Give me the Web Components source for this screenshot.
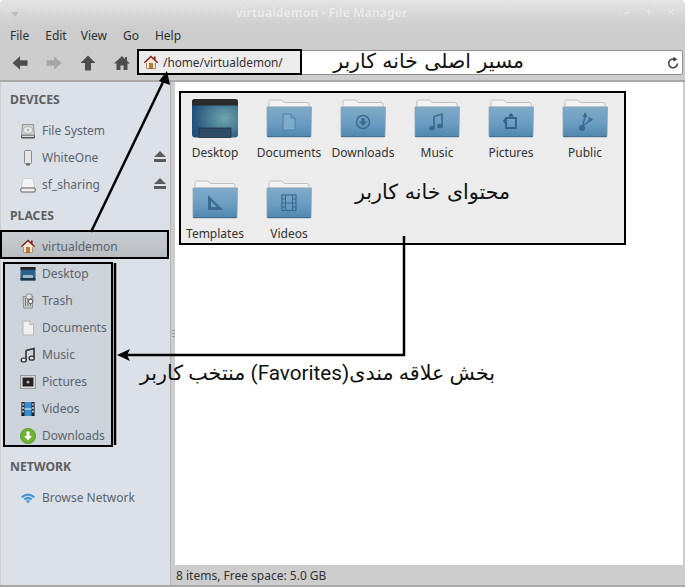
<!DOCTYPE html>
<html lang="en"><head><meta charset="utf-8"><title>File Manager</title>
<style>
html,body{margin:0;padding:0;background:#fff}
body{width:685px;height:588px;overflow:hidden;font:12px "Noto Sans",sans-serif;position:relative}
</style></head><body>
<fm-window title-text="virtualdemon - File Manager">
  <fm-sidebar slot="side">
    <fm-heading class="d">DEVICES</fm-heading>
    <fm-row icon="disk">File System</fm-row>
    <fm-row icon="usb" eject>WhiteOne</fm-row>
    <fm-row icon="drive" eject>sf_sharing</fm-row>
    <fm-heading class="p">PLACES</fm-heading>
    <fm-row icon="home" selected>virtualdemon</fm-row>
    <fm-favs>
      <fm-row icon="desktop">Desktop</fm-row>
      <fm-row icon="trash">Trash</fm-row>
      <fm-row icon="doc">Documents</fm-row>
      <fm-row icon="music">Music</fm-row>
      <fm-row icon="pics">Pictures</fm-row>
      <fm-row icon="video">Videos</fm-row>
      <fm-row icon="down">Downloads</fm-row>
    </fm-favs>
    <fm-heading class="n">NETWORK</fm-heading>
    <fm-row icon="wifi">Browse Network</fm-row>
  </fm-sidebar>
  <fm-content slot="main">
    <fm-item kind="desktop">Desktop</fm-item>
    <fm-item kind="doc">Documents</fm-item>
    <fm-item kind="down">Downloads</fm-item>
    <fm-item kind="music">Music</fm-item>
    <fm-item kind="pics">Pictures</fm-item>
    <fm-item kind="public">Public</fm-item>
    <fm-item kind="templates">Templates</fm-item>
    <fm-item kind="video">Videos</fm-item>
  </fm-content>
</fm-window>
<fm-annotations></fm-annotations>
<script>
const ICONS={
home:`<path d="M8 1.5 1 8l1 1.2L3 8.4V15h10V8.4l1 .8L15 8Z" fill="#f3e7d3"/><path d="M8 1.5 .8 8.2l1 1.1L8 3.6l6.2 5.7 1-1.1L12.6 5.8V2.5h-1.7v1.7Z" fill="#7a2620"/><path d="M3.5 9v5.6h9V9" fill="none" stroke="#a98e6d"/><rect x="6.5" y="9.5" width="3" height="5" fill="#c9772d" stroke="#8a4a18" stroke-width=".5"/>`,
disk:`<path d="M2.5 1.500h11l1 10.500h-13Z" fill="#cfd2cf" stroke="#777" stroke-width=".7"/><ellipse cx="8" cy="7" rx="4.6" ry="3.4" fill="#e5e7e5" stroke="#999" stroke-width=".6"/><circle cx="8" cy="7" r="1" fill="#999"/><rect x="1" y="12" width="14" height="3.4" rx="1" fill="#555"/><rect x="2" y="12.6" width="12" height="1.4" fill="#ddd"/>`,
usb:`<rect x="4.5" y="0.500" width="7" height="13" rx="1" fill="#e6e6e6" stroke="#8a8a8a"/><rect x="6" y="13.500" width="4" height="2" fill="#666"/>`,
drive:`<path d="M3 1.500h10l1.500 9.500h-13Z" fill="#f4f4f4" stroke="#c4c4c4" stroke-width=".7"/><rect x=".8" y="11" width="14.4" height="4" rx="1" fill="#eee" stroke="#555" stroke-width=".9"/>`,
desktop:`<rect x="0.500" y="1" width="15" height="13.500" rx="1.500" fill="#2c6289"/><rect x="0.500" y="1" width="15" height="2.800" fill="#222"/><rect x="3" y="9" width="10" height="5.500" fill="#9fb8c9"/><rect x="0.500" y="12" width="15" height="2.500" fill="#17384f"/>`,
trash:`<path d="M3 3.5h10l-.6 11.5H3.6Z" fill="#c8cbc8" stroke="#777" stroke-width=".7"/><path d="M5.5 5v8M8 5v8M10.5 5v8" stroke="#777"/><rect x="6" y="1" width="6" height="5" rx="2" fill="#dfdfdf" stroke="#777" stroke-width=".7"/><circle cx="10.6" cy="8.4" r="2.2" fill="#eee" stroke="#555"/>`,
doc:`<path d="M3 1h7l3.5 3.5V15H3Z" fill="#f1f1ef" stroke="#b7b7b7"/><path d="M10 1v3.5h3.5" fill="#ddd" stroke="#b7b7b7"/>`,
music:`<path d="M6 3.5 14 1.5v9.7" fill="none" stroke="#2e2e2e" stroke-width="1.6"/><path d="M6 3.5V13" fill="none" stroke="#2e2e2e" stroke-width="1.6"/><ellipse cx="3.7" cy="13" rx="2.6" ry="2" fill="#ddd" stroke="#2e2e2e" stroke-width="1.2"/><ellipse cx="11.7" cy="11.2" rx="2.6" ry="2" fill="#ddd" stroke="#2e2e2e" stroke-width="1.2"/>`,
pics:`<rect x=".7" y="1.7" width="14.6" height="12.6" fill="#eee" stroke="#888"/><rect x="2.5" y="3.5" width="11" height="9" fill="#222"/><circle cx="8" cy="8" r="1.6" fill="#aaa"/>`,
video:`<rect x="1.5" y="1" width="13" height="14" fill="#3b8dd0"/><rect x="1.5" y="1" width="3" height="14" fill="#222"/><rect x="11.5" y="1" width="3" height="14" fill="#222"/><path d="M2.3 2.5h1.4v2H2.3Zm0 3.500h1.400v2H2.300Zm0 3.500h1.400v2H2.300Zm10 -7h1.400v2h-1.400Zm0 3.500h1.400v2h-1.400Zm0 3.500h1.400v2h-1.400Z" fill="#eee"/><path d="M4.500 8h7" stroke="#dff" stroke-width="1"/>`,
down:`<circle cx="8" cy="8" r="7.600" fill="#6eb42f" stroke="#4b8a1d" stroke-width=".7"/><path d="M6.500 3.500h3V8H12L8 12.500 4 8h2.500Z" fill="#fff"/>`,
wifi:`<path d="M1 6.500Q8 .5 15 6.500L13.500 8Q8 3.500 2.500 8Z" fill="#3f97d8"/><path d="M3.500 8.800Q8 4.800 12.500 8.800L11 10.300Q8 8 5 10.300Z" fill="#3f97d8"/><path d="M6 11Q8 9.500 10 11L8 13.500Z" fill="#3f97d8"/>`
};
const C="#3c6a8c";
const GLYPH={
doc:`<path d="M-6-8H2L6-4V8H-6Z" fill="#7fabcb" stroke="#4f80a5" stroke-width="1"/><path d="M2-8V-4H6" fill="none" stroke="#4f80a5" stroke-width="1"/>`,
down:`<circle r="6.500" fill="none" stroke="${C}" stroke-width="1.500"/><path d="M-1.500-4h3v3.500h3L0 4-4.500-.5h3Z" fill="${C}"/>`,
music:`<path d="M-3-5.500 5-8V4" fill="none" stroke="${C}" stroke-width="1.600"/><path d="M-3-5.500V6" stroke="${C}" stroke-width="1.600"/><ellipse cx="-5" cy="6" rx="3" ry="2.300" fill="${C}"/><ellipse cx="3" cy="4" rx="3" ry="2.300" fill="${C}"/>`,
pics:`<rect x="-5" y="-4" width="10" height="10" fill="none" stroke="#2f5f82" stroke-width="1.800"/><path d="M-3-5.500 0-9 3-5.500ZM-8-1-6-4V2Z" fill="#2f5f82"/>`,
public:`<circle cx="-3" cy="6" r="3" fill="${C}"/><path d="M-3 6 0-5M-2 4 5-2" stroke="${C}" stroke-width="1.500"/><path d="M-2.500-5 0-10 2.500-5ZM3-5 8-3 4.500 .5Z" fill="${C}"/>`,
templates:`<path d="M-7 7V-8L8 7Z" fill="${C}"/><path d="M-4 4V-2L2 4Z" fill="#6d9fc3"/>`,
video:`<rect x="-7" y="-8" width="14" height="15.500" fill="none" stroke="${C}" stroke-width="1.200"/><path d="M-3.500-8V7.500M3.500-8V7.500M-3.500 0H3.500M-7-4h3.500M-7 0h3.500M-7 4h3.500M3.500-4h3.500M3.500 0h3.500M3.500 4h3.500" stroke="${C}" stroke-width="1"/>`
};
const svg=(b,w=16,h=16,vb="0 0 16 16")=>`<svg xmlns="http://www.w3.org/2000/svg" width="${w}" height="${h}" viewBox="${vb}" style="display:block">${b}</svg>`;
function def(name,css,html){
  customElements.define(name,class extends HTMLElement{
    constructor(){super();const r=this.attachShadow({mode:"open"});r.innerHTML=`<style>${css}</style>${typeof html==="function"?html(this):html}`;}
  });
}
const TB={
back:`<path d="M.5 8 8 1.200V5.200H15.500V10.800H8V14.800Z" fill="#4e4e4e"/>`,
fwd:`<path d="M15.500 8 8 1.200V5.200H.5V10.800H8V14.800Z" fill="#a6a6a6"/>`,
up:`<path d="M8 .5 15.500 8H11V15.500H5V8H.5Z" fill="#4e4e4e"/>`,
home:`<path d="M8 1 0 8.500h2.500V15h4v-4.500h3V15h4V8.500H16L13 5.700V2h-2v1.900Z" fill="#4e4e4e"/>`
};
def("fm-window",`
:host{display:flex;flex-direction:column;width:685px;height:587px;background:#cdcdcd;border-radius:5px 5px 0 0;overflow:hidden;color:#333;border-bottom:2px solid #a9a9a9;box-sizing:border-box}
.title{height:25px;flex:none;box-sizing:border-box;padding-right:42px;background:linear-gradient(#e4e4e4,#cfcfcf);display:flex;align-items:center;justify-content:center;position:relative;font:bold 12.200px "Noto Sans",sans-serif;color:#ececec;text-shadow:0 0 1px #c4c4c4}
.title .tri{position:absolute;left:11px;top:12px;width:0;height:0;border:4px solid transparent;border-top:5px solid #bdbdbd;border-bottom:0}
.title .ctl{position:absolute;right:7px;top:5px;display:flex;gap:8px;color:#e6e6e6;font:bold 14px "Noto Sans",sans-serif;line-height:14px}
.title .ctl span{width:14px;text-align:center}
.menu{height:20px;flex:none;display:flex;align-items:center;padding-left:10px;gap:16px;color:#2e2e2e}
.menu .v{margin-left:-2px}
.tools{height:37px;flex:none;display:flex;align-items:center;box-sizing:border-box;padding:0 2px 0 12px;border-bottom:2px solid #a9a9a9}
.tools>svg{margin-right:18px;flex:none}
.addr{flex:1;height:25px;margin-left:-11px;background:#fff;border:1px solid #8f8f8f;border-radius:2px;box-sizing:border-box;display:flex;align-items:center;justify-content:space-between}
.path{flex:none;width:165px;height:26px;margin:-1px 0 0 -1px;box-sizing:border-box;border:2px solid #000;background:#ececec;display:flex;align-items:center;padding-left:4px;gap:4px;color:#333;white-space:nowrap;font-size:11.800px}
.addr .re{margin-right:2px}
.body{flex:1;display:flex;min-height:0}
.split{width:5px;flex:none;background:#cdcdcd;border-left:1px solid #b4b4b4;box-sizing:border-box;display:flex;align-items:center;justify-content:center}
.grip{width:3px;height:7px;background:repeating-linear-gradient(#999 0 1px,transparent 1px 3px)}
.right{flex:1;display:flex;flex-direction:column;min-width:0;margin-right:2px}
.status{height:20px;flex:none;box-sizing:border-box;padding:1px 0 0 1px;display:flex;align-items:center;color:#333}
`,()=>`
<div class="title"><i class="tri"></i>virtualdemon - File Manager<div class="ctl"><span>–</span><span>+</span><span>×</span></div></div>
<div class="menu"><span>File</span><span>Edit</span><span class="v">View</span><span>Go</span><span>Help</span></div>
<div class="tools">
${svg(TB.back)}${svg(TB.fwd)}${svg(TB.up)}${svg(TB.home)}
<div class="addr"><div class="path">${svg(ICONS.home)}<span>/home/virtualdemon/</span></div>
<span class="re">${svg(`<path d="M13 8.500A5 5 0 1 1 9.500 3.700" fill="none" stroke="#444" stroke-width="1.800"/><path d="M8.500 .8 13 3.700 8.500 6.500Z" fill="#444"/>`,14,14)}</span></div>
</div>
<div class="body"><slot name="side"></slot><div class="split"><div class="grip"></div></div><div class="right"><slot name="main"></slot><div class="status">8 items, Free space: 5.0 GB</div></div></div>`);
def("fm-sidebar",`:host{display:block;width:170px;flex:none;background:#dce1e8;padding-top:5px;box-sizing:border-box;border-left:1px solid #cfcfcf}`,`<slot></slot>`);
def("fm-heading",`:host{display:flex;align-items:center;height:24px;padding-left:9px;font:bold 12.200px "Noto Sans",sans-serif;color:#5f5f5f}
:host(.d){margin-bottom:6px}
:host(.p){margin-top:5px;height:25px;margin-bottom:2px} :host(.n){margin-top:7px;height:25px;margin-bottom:5px}`,`<slot></slot>`);
def("fm-row",`:host{display:flex;align-items:center;height:27px;color:#5a6470;position:relative;box-sizing:border-box;padding-left:19px;white-space:nowrap}
:host([selected]){background:linear-gradient(#c9ced3,#b9bdc2);border:2px solid #000;width:169px;margin-left:-1px;height:29px;padding:3px 0 0 18px}
.t{margin-left:6px}
.e{position:absolute;right:4px;top:7px}`,
el=>`${svg(ICONS[el.getAttribute("icon")])}<span class="t"><slot></slot></span>${el.hasAttribute("eject")?`<span class="e">${svg(`<path d="M6 0 12 6H0Z M0 8H12V11H0Z" fill="#5a5a5a"/>`,12,12,"0 0 12 12")}</span>`:""}`);
def("fm-favs",`:host{display:block;box-sizing:border-box;width:110px;height:185px;margin:3px 0 0 2px;background:#cdd3da;border:2px solid #000}
.w{margin:-4px 0 0 -4px}`,`<div class="w"><slot></slot></div>`);
def("fm-content",`:host{display:block;flex:1;background:#fff;padding:9px 0 0 4px;box-sizing:border-box}
.box{box-sizing:border-box;width:447px;height:154px;border:2px solid #000;background:#ececec;display:grid;grid-template-columns:repeat(6,68px);column-gap:6px;grid-auto-rows:81px;padding-top:5px;align-content:start}`,`<div class="box"><slot></slot></div>`);
def("fm-item",`:host{display:flex;flex-direction:column;align-items:center;color:#333;white-space:nowrap;min-width:0}
svg{flex:none}
.l{margin-top:5px;line-height:17px;text-align:center}`,
el=>{const k=el.getAttribute("kind");
 let ic;
 if(k==="desktop") ic=`<defs><radialGradient id="g" cx=".7" cy=".5" r=".7"><stop offset="0" stop-color="#6fa6ad"/><stop offset="1" stop-color="#21507a"/></radialGradient></defs><rect x="1" y="1" width="46" height="38.500" rx="3" fill="url(#g)"/><path d="M4 1h40a3 3 0 0 1 3 3v3.500H1V4a3 3 0 0 1 3-3Z" fill="#2a2a2a"/><rect x="8" y="30" width="32" height="9.500" fill="#2f4d66" stroke="#1a2d3d" stroke-width=".7"/>`;
 else ic=`<defs><linearGradient id="f" x1="0" y1="0" x2="0" y2="1"><stop offset="0" stop-color="#80abcb"/><stop offset=".55" stop-color="#6b9cc1"/><stop offset="1" stop-color="#4f86af"/></linearGradient></defs><path d="M4 9V3.500Q4 2 5.500 2h11l3 2.500h22.500q2 0 2 2V9Z" fill="#f3f3f3" stroke="#c0c0c0"/><path d="M2 9h44.500l-.5 28.500q0 1.500-1.500 1.500h-41q-1.500 0-1.500-1.500Z" fill="url(#f)" stroke="#8aa3b6" stroke-width=".8"/><path d="M2 38.500H46" stroke="#46708f" stroke-width="1.200"/><g transform="translate(24 24)">${GLYPH[k]}</g>`;
 return `${svg(ic,48,41,"0 0 48 41")}<span class="l"><slot></slot></span>`;});
def("fm-annotations",`:host{position:absolute;left:0;top:0;width:685px;height:588px;pointer-events:none;display:block}
svg{position:absolute;left:0;top:0}
.n{position:absolute;font:20.600px "DejaVu Sans","Noto Sans",sans-serif;color:#111;white-space:nowrap;line-height:28px}
.f{font:20.700px Roboto,"DejaVu Sans",sans-serif;line-height:28px}`,`
<svg xmlns="http://www.w3.org/2000/svg" width="685" height="588"><g fill="none" stroke="#000" stroke-width="2.500"><path d="M91 232 164 80"/><path d="M404 236V355H126"/></g><path d="M115 263V445" stroke="#000" stroke-width="2.500"/><path d="M167 71 159 81 170 85Z" fill="#000"/><path d="M117 355 130 349 127 355 130 361Z" fill="#000"/></svg>
<div class="n" dir="rtl" style="right:161px;top:47px;font-size:20.400px">مسیر اصلی خانه کاربر</div>
<div class="n" dir="rtl" style="right:175px;top:178px">محتوای خانه کاربر</div>
<div class="n f" dir="rtl" style="right:190px;top:359px">بخش علاقه مندی(Favorites) منتخب کاربر</div>`);
</script>
</body></html>
